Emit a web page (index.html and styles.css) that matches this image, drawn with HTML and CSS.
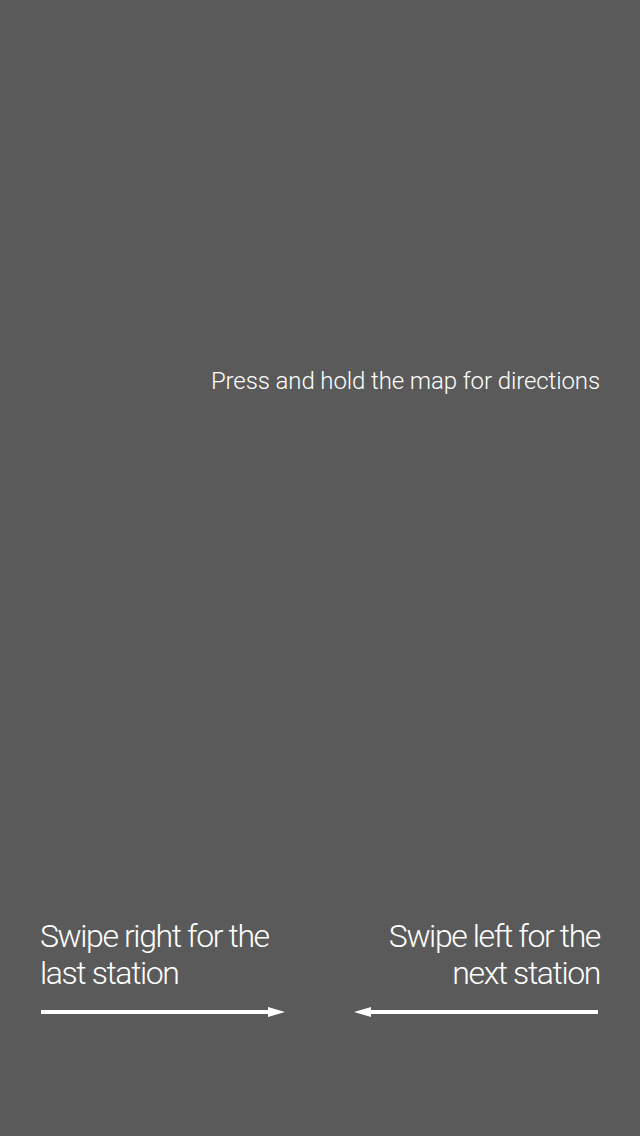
FILE: index.html
```html
<!DOCTYPE html>
<html>
<head>
<meta charset="utf-8">
<link rel="stylesheet" href="styles.css">
</head>
<body>
<div class="screen">
  <p class="hint">Press and hold the map for directions</p>
  <div class="swipes">
    <div class="swipe swipe-left">
      <p class="swipe-text">Swipe right for the<br>last station</p>
      <svg class="arrow" width="244" height="12" viewBox="0 0 244 12"><rect x="0" y="4" width="230" height="4" fill="#fff"/><polygon points="227,1 244,6 227,11" fill="#fff"/></svg>
    </div>
    <div class="swipe swipe-right">
      <p class="swipe-text">Swipe left for the<br>next station</p>
      <svg class="arrow" width="244" height="12" viewBox="0 0 244 12"><rect x="14" y="4" width="230" height="4" fill="#fff"/><polygon points="17,1 0,6 17,11" fill="#fff"/></svg>
    </div>
  </div>
</div>
</body>
</html>
```
FILE: styles.css
```css
html, body {
  margin: 0;
  padding: 0;
}
.screen {
  width: 640px;
  height: 1136px;
  background: #5a5a5a;
  color: #fff;
  font-family: Roboto, "Liberation Sans", sans-serif;
  font-weight: 300;
  display: flex;
  flex-direction: column;
  box-sizing: border-box;
  padding: 0 40px;
}
.hint {
  margin: 367px 0 0;
  font-size: 24px;
  line-height: 28px;
  letter-spacing: -0.1px;
  text-align: right;
}
.swipes {
  margin-top: auto;
  margin-bottom: 118px;
  display: flex;
  justify-content: space-between;
}
.swipe {
  display: flex;
  flex-direction: column;
}
.swipe-left { align-items: flex-start; }
.swipe-right { align-items: flex-end; }
.swipe-text {
  margin: 0;
  font-size: 32px;
  line-height: 37px;
  letter-spacing: -1.4px;
}
.swipe-right .swipe-text { text-align: right; }
.arrow {
  display: block;
  margin-top: 14px;
}
.swipe-left .arrow { margin-left: 1px; }
.swipe-right .arrow { margin-right: 2px; }
```
